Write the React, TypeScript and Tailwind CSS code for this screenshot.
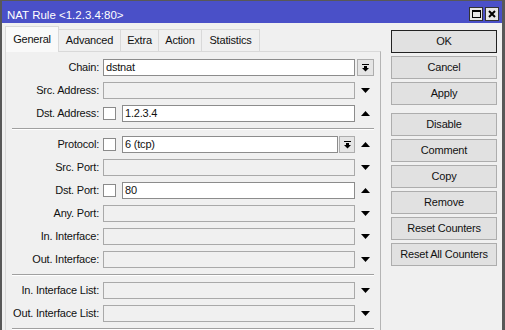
import React from "react";

type Slot = "up" | "down" | "combo";

type FieldRow = {
  label: string;
  value?: string;
  check?: boolean;
  enabled?: boolean;
  inlineCombo?: boolean;
  slot: Slot;
};

const SECTIONS: FieldRow[][] = [
  [
    { label: "Chain", value: "dstnat", enabled: true, slot: "combo" },
    { label: "Src. Address", slot: "down" },
    { label: "Dst. Address", value: "1.2.3.4", check: true, enabled: true, slot: "up" },
  ],
  [
    { label: "Protocol", value: "6 (tcp)", check: true, enabled: true, inlineCombo: true, slot: "up" },
    { label: "Src. Port", slot: "down" },
    { label: "Dst. Port", value: "80", check: true, enabled: true, slot: "up" },
    { label: "Any. Port", slot: "down" },
    { label: "In. Interface", slot: "down" },
    { label: "Out. Interface", slot: "down" },
  ],
  [
    { label: "In. Interface List", slot: "down" },
    { label: "Out. Interface List", slot: "down" },
  ],
];

const TABS = [
  { name: "General", w: "w-[54px]" },
  { name: "Advanced", w: "w-[63px]" },
  { name: "Extra", w: "w-[39px]" },
  { name: "Action", w: "w-[44px]" },
  { name: "Statistics", w: "w-[59px]" },
];

const ACTIONS = ["OK", "Cancel", "Apply", "Disable", "Comment", "Copy", "Remove", "Reset Counters", "Reset All Counters"];

const ArrowDown = () => (
  <svg width="9" height="5" viewBox="0 0 9 5">
    <polygon points="0,0 9,0 4.5,5" fill="#000" />
  </svg>
);

const ArrowUp = () => (
  <svg width="9" height="5" viewBox="0 0 9 5">
    <polygon points="0,5 9,5 4.5,0" fill="#000" />
  </svg>
);

const ComboIcon = () => (
  <svg width="7" height="8" viewBox="0 0 7 8">
    <rect x="0" y="0" width="7" height="1" fill="#000" />
    <rect x="2" y="2" width="3" height="2" fill="#000" />
    <polygon points="0,4 7,4 3.5,7.5" fill="#000" />
  </svg>
);

const ComboButton = ({ w }: { w: string }) => (
  <div className={`flex h-[17px] ${w} shrink-0 items-center justify-center border border-[#adadad] bg-[#e5e5e5]`}>
    <ComboIcon />
  </div>
);

function Field({ row }: { row: FieldRow }) {
  return (
    <div className="flex h-[17px] items-center">
      <div className="w-[93px] whitespace-nowrap text-right">{row.label}:</div>
      <div className="ml-[4px] flex w-[252px] items-center">
        {row.check && <div className="mr-[6px] h-[13px] w-[13px] shrink-0 border border-[#8a8a8a] bg-white" />}
        <div
          className={
            row.enabled
              ? "h-[17px] flex-1 border border-[#8c8c8c] bg-white pl-[2px] leading-[15px]"
              : "h-[17px] flex-1 border border-[#a9a9a9] bg-[#f0f0f0]"
          }
        >
          {row.value}
        </div>
        {row.inlineCombo && (
          <div className="ml-[1px]">
            <ComboButton w="w-[16px]" />
          </div>
        )}
      </div>
      <div className="ml-[2px] flex w-[17px] justify-center">
        {row.slot === "combo" && <ComboButton w="w-[17px]" />}
        {row.slot === "down" && <ArrowDown />}
        {row.slot === "up" && <ArrowUp />}
      </div>
    </div>
  );
}

const Separator = () => <div className="mx-[6px] h-[2px] border-t border-b border-t-[#a0a0a0] border-b-white" />;

export default function App() {
  return (
    <div className="flex h-[330px] w-[505px] flex-col overflow-hidden border-t border-l-2 border-r-[3px] border-[#585858] bg-[#f0f0f0] font-['Liberation_Sans',Arial,sans-serif] text-[11px] tracking-[-0.2px] text-[#111]">
      {/* title bar */}
      <div className="flex h-[22px] shrink-0 bg-[#4a50c8] pr-[3px]">
        <div className="flex-1 pl-[5px] pt-[8px] text-[11.5px] leading-[13px] tracking-normal text-white">NAT Rule &lt;1.2.3.4:80&gt;</div>
        <div className="mt-[6px] flex h-[14px] w-[14px] items-center justify-center border border-[#333] bg-[#e6e6e6]">
          <div className="h-[8px] w-[9px] border border-t-2 border-black" />
        </div>
        <div className="ml-[2px] mt-[6px] flex h-[14px] w-[14px] items-center justify-center border border-[#333] bg-[#e6e6e6]">
          <svg width="8" height="8" viewBox="0 0 8 8">
            <path d="M1 1 L7 7 M7 1 L1 7" stroke="#000" strokeWidth="2" />
          </svg>
        </div>
      </div>

      <div className="flex flex-1 pl-[3px]">
        {/* tabs + general page */}
        <div className="flex w-[376px] flex-col">
          <div className="mt-[3px] flex h-[25px] items-end">
            {TABS.map((t, i) =>
              i === 0 ? (
                <div
                  key={t.name}
                  className={`relative z-10 -mb-px flex h-[26px] ${t.w} items-center justify-center border-x border-t border-[#d9d9d9] bg-[#f9f9f9]`}
                >
                  {t.name}
                </div>
              ) : (
                <div
                  key={t.name}
                  className={`-ml-px flex h-[22px] ${t.w} items-center justify-center border-x border-t border-[#d9d9d9] bg-[#f0f0f0]`}
                >
                  {t.name}
                </div>
              )
            )}
          </div>
          <div className="flex flex-1 flex-col gap-[6px] border-l border-t border-r border-l-[#d9d9d9] border-t-[#d9d9d9] border-r-[#b4b4b4] pt-[7px]">
            {SECTIONS.map((rows, si) => (
              <React.Fragment key={si}>
                {rows.map((r) => (
                  <Field key={r.label} row={r} />
                ))}
                <Separator />
              </React.Fragment>
            ))}
          </div>
        </div>

        {/* buttons */}
        <div className="ml-[10px] flex w-[106px] flex-col pt-[7px]">
          {ACTIONS.map((a, i) => (
            <button
              key={a}
              className={`flex h-[23px] shrink-0 items-center justify-center border bg-[#e1e1e1] ${
                i === 0 ? "border-[#222]" : "border-[#adadad]"
              } ${i === 3 ? "mt-[8px]" : i > 0 ? "mt-[3px]" : ""}`}
            >
              {a}
            </button>
          ))}
        </div>
      </div>
    </div>
  );
}
